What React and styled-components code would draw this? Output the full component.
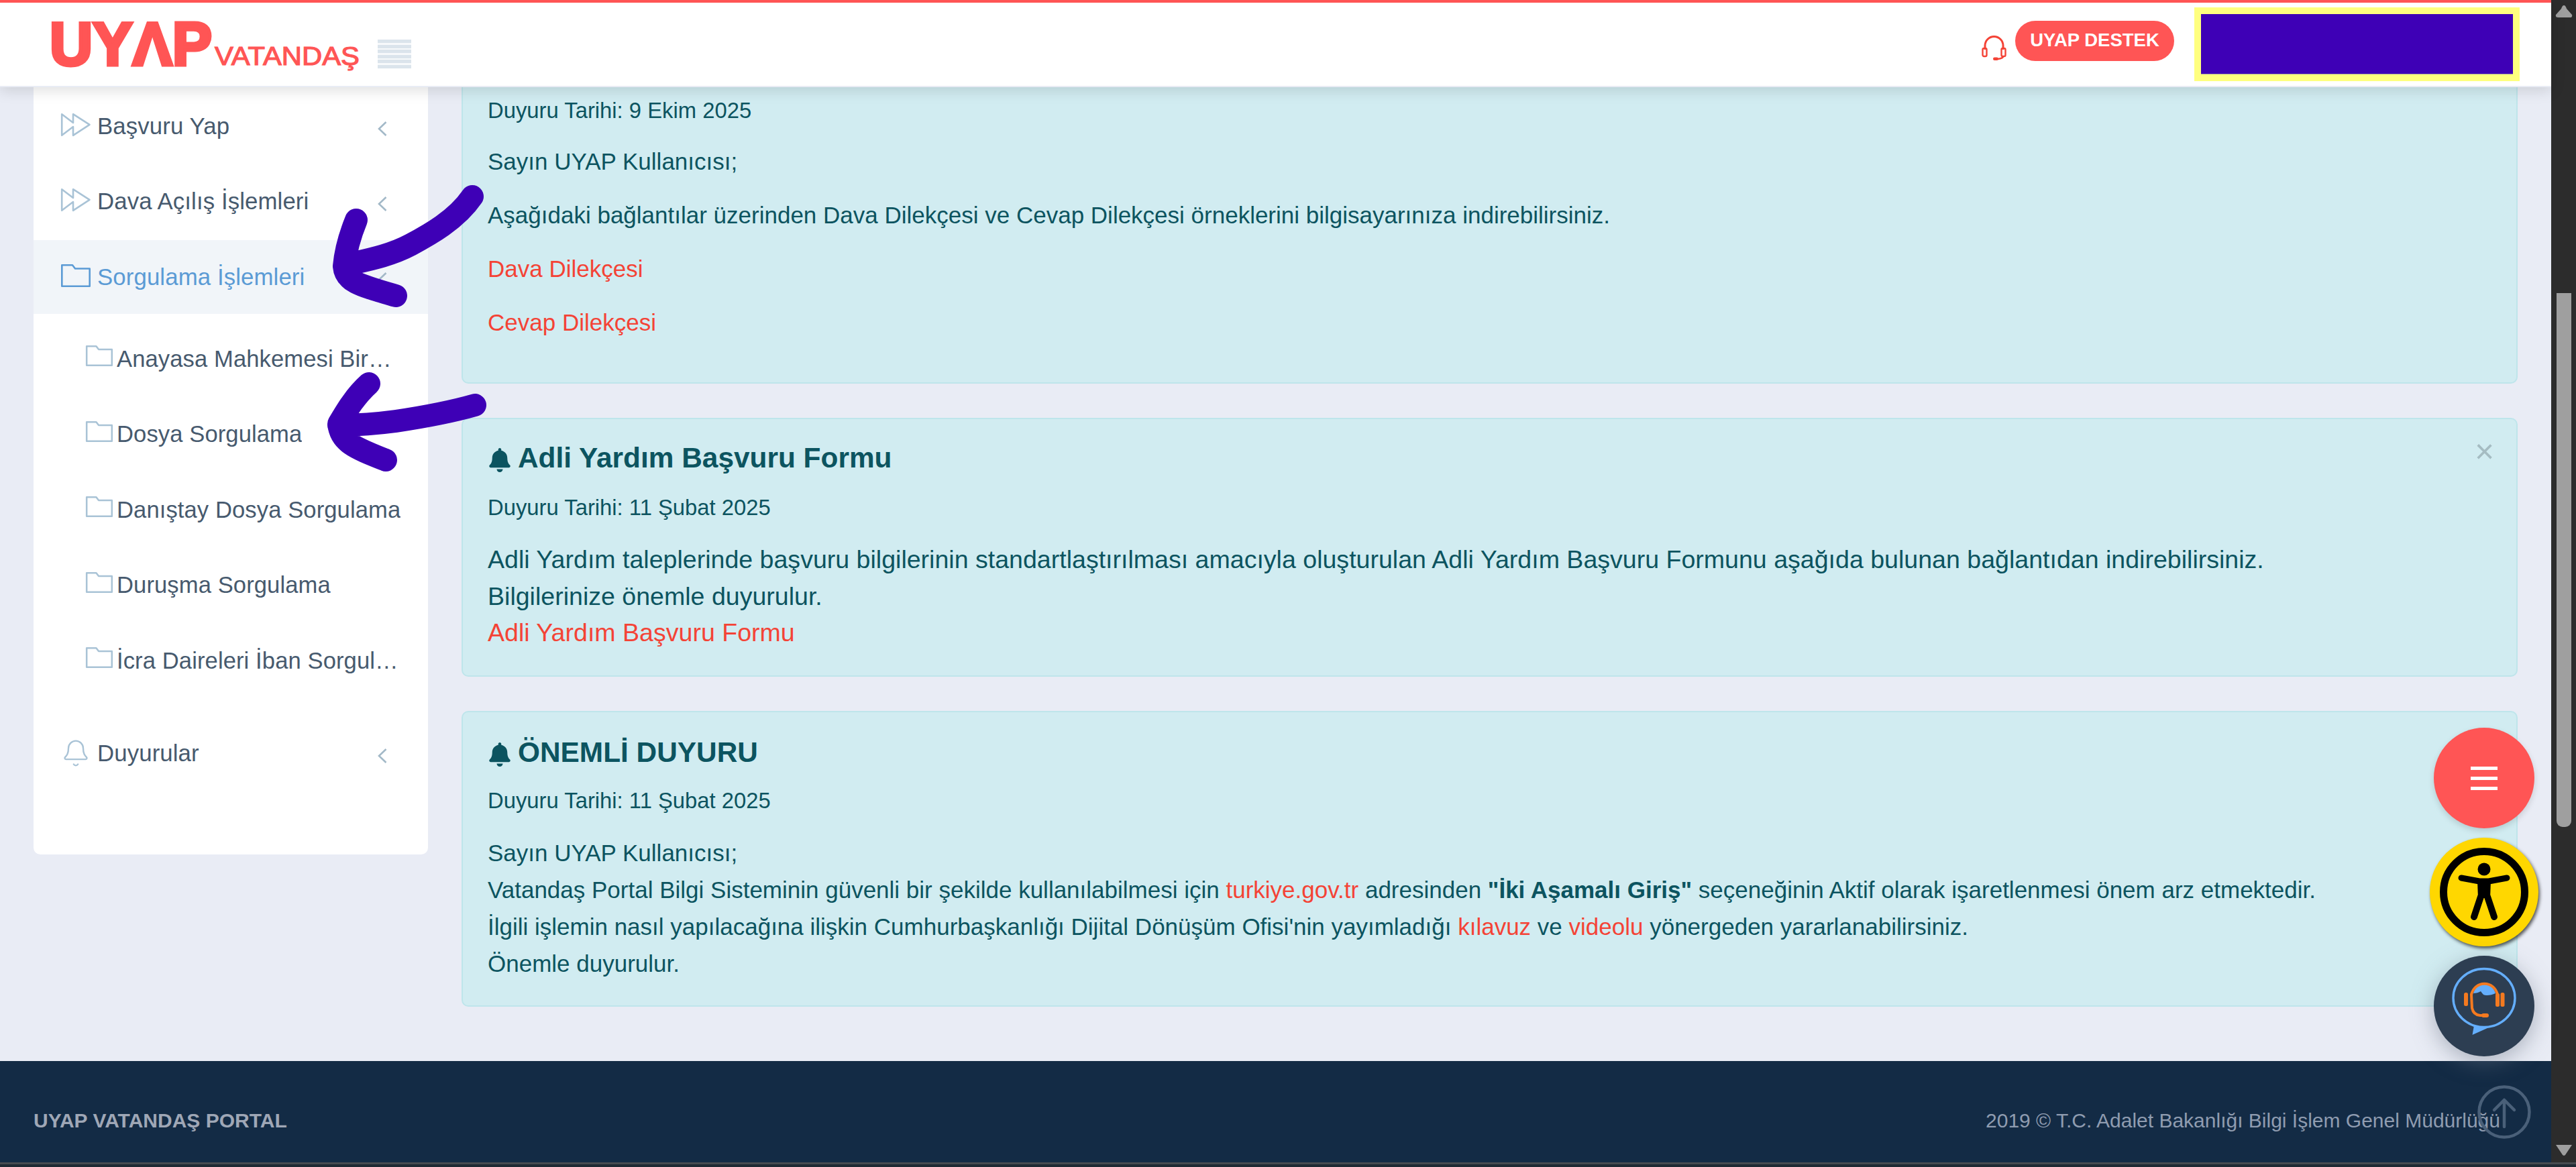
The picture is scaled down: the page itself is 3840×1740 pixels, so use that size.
import React from "react";
import styled, { createGlobalStyle } from "styled-components";
import { FaBell } from "react-icons/fa";
import { Bell } from "lucide-react";

const RED = "#ff5555";
const LINK = "#f44336";
const ICON = "#a9c3d6";
const TEAL = "#0c5460";

const Global = createGlobalStyle`
  html, body { margin: 0; padding: 0; width: 3840px; height: 1740px; overflow: hidden; }
  body { background: #e9ecf5; font-family: "Liberation Sans", Arial, sans-serif; }
  * { box-sizing: border-box; }
`;

const Stage = styled.div`
  position: relative; width: 3840px; height: 1740px; display: flex; flex-direction: column; overflow: hidden;
`;
const Upper = styled.div`display: flex; flex: 1; min-height: 0;`;
const Page = styled.div`flex: 1; min-width: 0; display: flex; flex-direction: column; background: #e9ecf5;`;
const HScroll = styled.div`height: 7px; background: #1f2933; border-top: 3px solid #474b50;`;

/* scrollbar */
const VScroll = styled.div`
  width: 37px; background: #2c2c2c; display: flex; flex-direction: column; align-items: center; padding: 8px 0 9px;
`;
const ScrollThumb = styled.div`
  width: 22px; height: 796px; margin-top: 411px; background: #9f9f9f; border-radius: 0 0 9px 9px;
`;
const ArrowSlot = styled.svg`
  width: 26px; height: 18px; display: block; flex: none; margin-top: ${p => (p.$bottom ? "auto" : "0")};
`;

/* header */
const Header = styled.header`
  position: relative; z-index: 5; flex: none; height: 130px; background: #fff;
  border-top: 4px solid ${RED}; border-bottom: 2px solid #e9ecf5;
  box-shadow: 0 5px 20px rgba(0,0,0,.13);
  display: flex; align-items: center; padding: 0 47px 0 78px;
`;
const LogoSvg = styled.svg`width: 458px; height: 80px; display: block; flex: none; margin-top: 8px; overflow: visible;`;
const LogoMain = styled.text`
  font: 700 91px "Liberation Sans", Arial, sans-serif; fill: ${RED}; stroke: ${RED}; stroke-width: 5px;
`;
const LogoSub = styled.text`
  font: 400 39px "Liberation Sans", Arial, sans-serif; fill: ${RED}; stroke: ${RED}; stroke-width: 1.2px;
`;
const MenuLines = styled.div`
  width: 50px; height: 43px; margin: 29px 0 0 27px; flex: none;
  background: repeating-linear-gradient(to bottom, #dbe4ec 0 5px, #f7f9fb 5px 7.6px);
`;
const HeaderRight = styled.div`margin-left: auto; display: flex; align-items: center;`;
const HeadsetIcon = styled.svg`width: 37px; height: 37px; display: block; margin: 10px 13px 0 0;`;
const SupportButton = styled.button`
  width: 237px; height: 60px; border: 0; border-radius: 30px; background: ${RED}; color: #fff;
  font: 700 27.5px "Liberation Sans", Arial, sans-serif; padding: 0 0 2px; margin-right: 30px;
  margin-top: -10px;
`;
const RedactedBox = styled.div`
  width: 485px; height: 110px; border: 10px solid #ffff7f; background: #3e00b6; margin-top: 0;
  box-shadow: inset 0 -1px 0 #a9a3a0;
`;

/* body */
const Main = styled.main`flex: 1; min-height: 0; display: flex; gap: 50px; padding: 0 50px;`;
const Sidebar = styled.nav`
  width: 588px; height: 1144px; flex: none; background: #fff; border-radius: 0 0 10px 10px; padding-top: 2px;
`;
const MenuRow = styled.div`
  height: ${p => (p.$active ? "110px" : "112px")};
  margin-top: ${p => (p.$active ? "2px" : p.$gap || "0")};
  background: ${p => (p.$active ? "#f1f5f9" : "transparent")};
  color: ${p => (p.$active ? "#5b9bd5" : "#475a6e")};
  display: flex; align-items: center; padding: 0 61px 0 41px; gap: 10px;
  font-size: 34.8px; letter-spacing: .1px;
`;
const RowIcon = styled.svg`
  width: 44px; height: ${p => p.$h || "34px"}; flex: none; display: block; margin-bottom: 5px; overflow: visible;
`;
const BellWrap = styled.span`
  width: 44px; height: 50px; flex: none; display: flex; justify-content: center; margin-bottom: 1px; color: ${ICON};
`;
const Chevron = styled.svg`width: 14px; height: 22px; margin: 8px 0 0 auto; flex: none; display: block;`;
const SubMenu = styled.div`padding-top: 11px;`;
const SubRow = styled.div`
  height: 112.5px; display: flex; align-items: center; gap: 6px; padding: 0 38px 0 78px;
  color: #475a6e; font-size: 34.6px; letter-spacing: .1px;
`;
const SubIcon = styled.svg`width: 40px; height: 31px; flex: none; display: block; margin-bottom: 9px; overflow: visible;`;
const SubText = styled.span`min-width: 0; white-space: nowrap; overflow: hidden; text-overflow: ellipsis;`;

const Content = styled.section`flex: 1; min-width: 0; display: flex; flex-direction: column; gap: 51px;`;
const Card = styled.article`
  background: #d1ecf1; border: 2px solid #bee5eb; border-top-width: ${p => (p.$cut ? "0" : "2px")};
  border-radius: ${p => (p.$cut ? "0 0 10px 10px" : "10px")};
  color: ${TEAL}; height: ${p => p.$h}; padding: ${p => (p.$cut ? "11px" : "28px")} 38px 0 37px;
  flex: none;
`;
const TitleRow = styled.div`display: flex; align-items: center; height: 60px; margin-top: ${p => p.$mt || "0"};`;
const Title = styled.h3`
  margin: 0; font-size: 42.4px; font-weight: 700; display: flex; align-items: center; gap: 10px; line-height: 60px;
  svg { width: 34px; height: 36px; flex: none; margin: 5px 0 0 1px; }
`;
const Close = styled.span`margin-left: auto; width: 24px; font-size: 50px; line-height: 60px; color: #a5bcc2; text-align: center; margin-top: -20px;`;
const DateLine = styled.div`font-size: 32.8px; line-height: 48px; margin-top: ${p => p.$mt || "0"};`;
const Para = styled.p`
  margin: ${p => p.$mt || "0"} 0 0; font-size: ${p => p.$fs || "35px"}; line-height: ${p => p.$lh || "48px"};
`;
const Link = styled.a`color: ${LINK}; text-decoration: none;`;
const Strong = styled.b`font-weight: 700;`;

/* footer */
const Footer = styled.footer`
  flex: none; height: 151px; background: #132b45; display: flex; align-items: center; justify-content: space-between;
  padding: 26px 76px 0 50px;
`;
const FooterBrand = styled.div`font-size: 30px; font-weight: 700; color: #9fa7b6;`;
const FooterCopy = styled.div`font-size: 30px; color: #8f9cb0;`;

/* overlays */
const Fabs = styled.div`
  position: absolute; z-index: 8; left: 3622px; top: 1085px; width: 162px;
  display: flex; flex-direction: column; align-items: center; gap: 14px;
`;
const Fab = styled.button`
  width: ${p => p.$size}px; height: ${p => p.$size}px; border-radius: 50%; border: 0; padding: 0; background: ${p => p.$bg};
  box-shadow: ${p => p.$shadow}; display: flex; align-items: center; justify-content: center; flex: none;
  svg { display: block; }
`;
const BurgerBars = styled.span`
  width: 40px; height: 35px;
  background: linear-gradient(#fff 0 0) 0 0/100% 5px no-repeat, linear-gradient(#fff 0 0) 0 15px/100% 5px no-repeat, linear-gradient(#fff 0 0) 0 30px/100% 5px no-repeat;
`;
const ToTop = styled.svg`position: absolute; z-index: 8; left: 3693px; top: 1618px; width: 80px; height: 80px;`;
const Scribble = styled.svg`position: absolute; z-index: 7; left: 0; top: 0; width: 3840px; height: 1740px; pointer-events: none;`;

const ForwardIcon = () => (
  <RowIcon viewBox="0 0 44 34" aria-hidden="true">
    <path d="M1.2 1.2 L18 14 V1.2 L42.5 16.8 L18 32.8 V20 L1.2 32.8 Z" fill="none" stroke={ICON} strokeWidth="2.6" strokeLinejoin="round" />
  </RowIcon>
);
const folderPath = "M1.3 1.3 H17 L21 6.5 H42.7 V32.7 H1.3 Z";
const FolderIcon = ({ color = ICON }) => (
  <RowIcon viewBox="0 0 44 34" aria-hidden="true">
    <path d={folderPath} fill="none" stroke={color} strokeWidth="2.6" strokeLinejoin="round" />
  </RowIcon>
);
const SubFolder = () => (
  <SubIcon viewBox="0 0 44 34" aria-hidden="true">
    <path d={folderPath} fill="none" stroke={ICON} strokeWidth="2.8" strokeLinejoin="round" />
  </SubIcon>
);
const Chev = () => (
  <Chevron viewBox="0 0 14 22" aria-hidden="true">
    <path d="M12.5 1 L2 11 L12.5 21" fill="none" stroke="#a3b9c8" strokeWidth="2.6" />
  </Chevron>
);

export default function App() {
  return (
    <Stage>
      <Global />
      <Upper>
        <Page>
          <Header>
            <LogoSvg viewBox="0 0 458 80" role="img" aria-label="UYAP VATANDAŞ">
              <LogoMain x="-4" y="67" textLength="242" lengthAdjust="spacingAndGlyphs">UYΛP</LogoMain>
              <LogoSub x="242" y="67" textLength="216" lengthAdjust="spacingAndGlyphs">VATANDAŞ</LogoSub>
            </LogoSvg>
            <MenuLines />
            <HeaderRight>
              <HeadsetIcon viewBox="0 0 37 37" aria-hidden="true">
                <path d="M5 21 V15 A13.5 13.5 0 0 1 32 15 V21" fill="none" stroke={LINK} strokeWidth="3" />
                <rect x="1.5" y="19" width="6" height="12" rx="2" fill="none" stroke={LINK} strokeWidth="2.4" />
                <rect x="29.5" y="19" width="6" height="12" rx="2" fill="none" stroke={LINK} strokeWidth="2.4" />
                <path d="M32 31 Q32 34 24 35" fill="none" stroke={LINK} strokeWidth="2.6" />
                <rect x="17" y="32.5" width="8" height="4.5" rx="2.2" fill={LINK} />
              </HeadsetIcon>
              <SupportButton>UYAP DESTEK</SupportButton>
              <RedactedBox />
            </HeaderRight>
          </Header>
          <Main>
            <Sidebar>
              <MenuRow><ForwardIcon /><span>Başvuru Yap</span><Chev /></MenuRow>
              <MenuRow><ForwardIcon /><span>Dava Açılış İşlemleri</span><Chev /></MenuRow>
              <MenuRow $active><FolderIcon color="#5b9bd5" /><span>Sorgulama İşlemleri</span><Chev /></MenuRow>
              <SubMenu>
                {[
                  "Anayasa Mahkemesi Bireysel Başvuru",
                  "Dosya Sorgulama",
                  "Danıştay Dosya Sorgulama",
                  "Duruşma Sorgulama",
                  "İcra Daireleri İban Sorgulama",
                ].map(t => (
                  <SubRow key={t}><SubFolder /><SubText>{t}</SubText></SubRow>
                ))}
              </SubMenu>
              <MenuRow $gap="25.5px">
                <BellWrap><Bell size={50} strokeWidth={1.3} /></BellWrap>
                <span>Duyurular</span><Chev />
              </MenuRow>
            </Sidebar>
            <Content>
              <Card $cut $h="442px">
                <DateLine>Duyuru Tarihi: 9 Ekim 2025</DateLine>
                <Para $mt="28px">Sayın UYAP Kullanıcısı;</Para>
                <Para $mt="32px">Aşağıdaki bağlantılar üzerinden Dava Dilekçesi ve Cevap Dilekçesi örneklerini bilgisayarınıza indirebilirsiniz.</Para>
                <Para $mt="32px"><Link>Dava Dilekçesi</Link></Para>
                <Para $mt="32px"><Link>Cevap Dilekçesi</Link></Para>
              </Card>
              <Card $h="386px">
                <TitleRow>
                  <Title><FaBell />Adli Yardım Başvuru Formu</Title>
                  <Close>×</Close>
                </TitleRow>
                <DateLine $mt="20px">Duyuru Tarihi: 11 Şubat 2025</DateLine>
                <Para $mt="26px" $fs="37.55px" $lh="54.5px">Adli Yardım taleplerinde başvuru bilgilerinin standartlaştırılması amacıyla oluşturulan Adli Yardım Başvuru Formunu aşağıda bulunan bağlantıdan indirebilirsiniz.</Para>
                <Para $fs="37.55px" $lh="54.5px">Bilgilerinize önemle duyurulur.</Para>
                <Para $fs="37.55px" $lh="54.5px"><Link>Adli Yardım Başvuru Formu</Link></Para>
              </Card>
              <Card $h="441px">
                <TitleRow $mt="2px">
                  <Title><FaBell />ÖNEMLİ DUYURU</Title>
                </TitleRow>
                <DateLine $mt="18px">Duyuru Tarihi: 11 Şubat 2025</DateLine>
                <Para $mt="26px" $lh="55px">Sayın UYAP Kullanıcısı;</Para>
                <Para $lh="55px">Vatandaş Portal Bilgi Sisteminin güvenli bir şekilde kullanılabilmesi için <Link>turkiye.gov.tr</Link> adresinden <Strong>"İki Aşamalı Giriş"</Strong> seçeneğinin Aktif olarak işaretlenmesi önem arz etmektedir.</Para>
                <Para $lh="55px">İlgili işlemin nasıl yapılacağına ilişkin Cumhurbaşkanlığı Dijital Dönüşüm Ofisi'nin yayımladığı <Link>kılavuz</Link> ve <Link>videolu</Link> yönergeden yararlanabilirsiniz.</Para>
                <Para $lh="55px">Önemle duyurulur.</Para>
              </Card>
            </Content>
          </Main>
          <Footer>
            <FooterBrand>UYAP VATANDAŞ PORTAL</FooterBrand>
            <FooterCopy>2019 © T.C. Adalet Bakanlığı Bilgi İşlem Genel Müdürlüğü</FooterCopy>
          </Footer>
        </Page>
        <VScroll>
          <ArrowSlot viewBox="0 0 26 18" aria-hidden="true"><path d="M13 0 C15 0 16 2 17 5 L25 14 Q26 18 22 18 H4 Q0 18 1 14 L9 5 C10 2 11 0 13 0 Z" fill="#9f9f9f" /></ArrowSlot>
          <ScrollThumb />
          <ArrowSlot $bottom viewBox="0 0 26 18" aria-hidden="true"><path d="M1 1 H25 L15 16 Q13 18 11 16 Z" fill="#9f9f9f" /></ArrowSlot>
        </VScroll>
      </Upper>
      <HScroll />

      <Scribble viewBox="0 0 3840 1740" aria-hidden="true">
        <g fill="none" stroke="#3e00b6" strokeWidth="34" strokeLinecap="round" strokeLinejoin="round">
          <path d="M704 293 C680 328 640 350 612 365 C580 382 545 388 515 395 M531 328 C522 350 515 375 513 397 C515 420 535 425 590 441" />
          <path d="M708 604 C680 612 630 622 590 628 C560 632 530 634 505 634 M550 572 C530 590 518 610 505 632 C508 660 530 668 575 686" />
        </g>
      </Scribble>

      <Fabs>
        <Fab $size={150} $bg={RED} $shadow="0 4px 10px rgba(0,0,0,.14)"><BurgerBars /></Fab>
        <Fab $size={162} $bg="#ffd700" $shadow="2px 3px 5px rgba(0,0,0,.65)">
          <svg width="162" height="162" viewBox="0 0 162 162" aria-hidden="true">
            <circle cx="81" cy="81" r="60.5" fill="none" stroke="#000" strokeWidth="11" />
            <circle cx="81" cy="47" r="9.5" fill="#000" />
            <path d="M47 60 L74 65 H88 L115 60" fill="none" stroke="#000" strokeWidth="9" strokeLinecap="round" strokeLinejoin="round" />
            <path d="M71 64 H91 L90 90 H72 Z" fill="#000" />
            <path d="M76 88 L66 118 M86 88 L96 118" fill="none" stroke="#000" strokeWidth="10" strokeLinecap="round" />
          </svg>
        </Fab>
        <Fab $size={150} $bg="#2d3e52" $shadow="0 8px 32px rgba(110,120,135,.5)">
          <svg width="150" height="150" viewBox="-12 -6 150 150" aria-hidden="true">
            <ellipse cx="63" cy="57" rx="46" ry="43.5" fill="none" stroke="#64aefc" strokeWidth="3.4" />
            <path d="M48 98 L45.5 112 L70 101 Z" fill="#64aefc" />
            <path d="M47 50 C50 40 57 36 63 36 C70 36 77 40 80 50 C74 53 66 54 62 52 C60 50 59 48 58 47 C55 49 51 50 47 50 Z" fill="#64aefc" />
            <path d="M44 52 A20 21 0 0 1 83 52" fill="none" stroke="#f47a20" strokeWidth="4" />
            <rect x="33" y="49" width="6" height="20" rx="2.5" fill="#f47a20" />
            <path d="M44 52 L45 72 Q47 82 57 83 H66" fill="none" stroke="#f47a20" strokeWidth="4" strokeLinecap="round" />
            <rect x="80" y="50" width="6" height="20" rx="2.5" fill="#f47a20" />
            <rect x="87.5" y="49" width="6" height="21" rx="2.5" fill="#f47a20" />
            <path d="M62 83 H67" fill="none" stroke="#f47a20" strokeWidth="6" strokeLinecap="round" />
          </svg>
        </Fab>
      </Fabs>
      <ToTop viewBox="0 0 80 80" aria-hidden="true">
        <circle cx="40" cy="40" r="37.5" fill="none" stroke="#4a6079" strokeWidth="4.5" />
        <path d="M40 62 V22 M25 37 L40 22 L55 37" fill="none" stroke="#4a6079" strokeWidth="4.5" strokeLinecap="round" strokeLinejoin="round" />
      </ToTop>
    </Stage>
  );
}
